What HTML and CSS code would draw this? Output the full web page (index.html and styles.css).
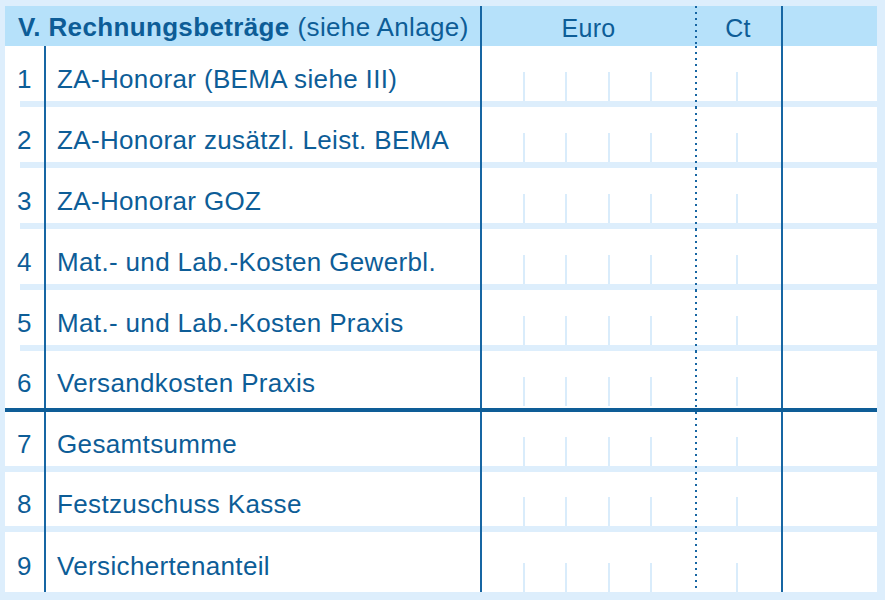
FILE: index.html
```html
<!DOCTYPE html>
<html lang="de">
<head>
<meta charset="utf-8">
<title>V. Rechnungsbeträge</title>
<link rel="stylesheet" href="styles.css">
</head>
<body>
<div class="form">
  <div class="head">
    <div class="h-title"><b>V. Rechnungsbeträge</b> (siehe Anlage)</div>
    <div class="h-euro">Euro</div>
    <div class="h-ct">Ct</div>
    <div class="h-extra"></div>
  </div>

  <div class="row">
    <div class="num">1</div><div class="label">ZA-Honorar (BEMA siehe III)</div>
    <div class="euro"><span></span><span></span><span></span><span></span><span></span></div>
    <div class="ct"><span></span><span></span></div><div class="extra"></div>
  </div>
  <div class="row">
    <div class="num">2</div><div class="label">ZA-Honorar zusätzl. Leist. BEMA</div>
    <div class="euro"><span></span><span></span><span></span><span></span><span></span></div>
    <div class="ct"><span></span><span></span></div><div class="extra"></div>
  </div>
  <div class="row">
    <div class="num">3</div><div class="label">ZA-Honorar GOZ</div>
    <div class="euro"><span></span><span></span><span></span><span></span><span></span></div>
    <div class="ct"><span></span><span></span></div><div class="extra"></div>
  </div>
  <div class="row">
    <div class="num">4</div><div class="label">Mat.- und Lab.-Kosten Gewerbl.</div>
    <div class="euro"><span></span><span></span><span></span><span></span><span></span></div>
    <div class="ct"><span></span><span></span></div><div class="extra"></div>
  </div>
  <div class="row">
    <div class="num">5</div><div class="label">Mat.- und Lab.-Kosten Praxis</div>
    <div class="euro"><span></span><span></span><span></span><span></span><span></span></div>
    <div class="ct"><span></span><span></span></div><div class="extra"></div>
  </div>
  <div class="row row-total">
    <div class="num">6</div><div class="label">Versandkosten Praxis</div>
    <div class="euro"><span></span><span></span><span></span><span></span><span></span></div>
    <div class="ct"><span></span><span></span></div><div class="extra"></div>
  </div>
  <div class="row row-low">
    <div class="num">7</div><div class="label">Gesamtsumme</div>
    <div class="euro"><span></span><span></span><span></span><span></span><span></span></div>
    <div class="ct"><span></span><span></span></div><div class="extra"></div>
  </div>
  <div class="row row-low">
    <div class="num">8</div><div class="label">Festzuschuss Kasse</div>
    <div class="euro"><span></span><span></span><span></span><span></span><span></span></div>
    <div class="ct"><span></span><span></span></div><div class="extra"></div>
  </div>
  <div class="row row-last">
    <div class="num">9</div><div class="label">Versichertenanteil</div>
    <div class="euro"><span></span><span></span><span></span><span></span><span></span></div>
    <div class="ct"><span></span><span></span></div><div class="extra"></div>
  </div>
</div>
</body>
</html>
```

FILE: styles.css
```css
:root {
  --page: #ddeefc;
  --head: #b6e1fa;
  --band: #ddeefc;
  --ink: #0d5d97;
  --line: #1766a3;
  --tick: #d9ecfb;
}

* { box-sizing: border-box; }

html, body {
  margin: 0;
  background: var(--page);
}

body {
  font-family: "Liberation Sans", Arial, Helvetica, sans-serif;
  color: var(--ink);
  width: 885px;
  height: 600px;
  overflow: hidden;
  letter-spacing: 0.35px;
}

.form {
  margin: 6px 0 0 5px;
  width: 872px;
}

.head,
.row {
  display: grid;
  grid-template-columns: 39px 436px 215px 86px 96px;
}

/* ---------- header ---------- */
.head {
  height: 40px;
  background: var(--head);
  font-size: 26px;
}

.h-title {
  grid-column: 1 / span 2;
  display: flex;
  align-items: center;
  padding-left: 13px;
  padding-top: 3px;
  white-space: nowrap;
}

.h-title b { font-weight: 700; margin-right: 8px; }

.h-euro,
.h-ct {
  display: flex;
  align-items: center;
  justify-content: center;
  font-size: 25px;
  padding-top: 5px;
}

.h-euro { border-left: 2px solid var(--line); }

.h-ct {
  background: linear-gradient(to bottom, var(--line) 2px, transparent 2px) 0 0 / 2px 6px repeat-y;
}

.h-extra { border-left: 2px solid var(--line); }

/* ---------- rows ---------- */
.row {
  height: 61px;
  font-size: 26px;
}

.row > div {
  background: linear-gradient(to top, var(--band) 6px, #fff 6px);
}

.num,
.label {
  padding-top: 5px;
}

.row > .num {
  background:
    linear-gradient(to top, var(--band) 6px, transparent 6px) 15px 0 / calc(100% - 15px) 100% no-repeat,
    #fff;
  display: flex;
  align-items: center;
  justify-content: center;
}

.label {
  border-left: 2px solid var(--line);
  display: flex;
  align-items: center;
  padding-left: 11px;
  white-space: nowrap;
}

.euro {
  border-left: 2px solid var(--line);
  display: flex;
  align-items: flex-end;
  padding-bottom: 6px;
}

.row > .ct {
  background:
    linear-gradient(to bottom, var(--line) 2px, transparent 2px) 0 0 / 2px 6px repeat-y,
    linear-gradient(to top, var(--band) 6px, #fff 6px);
  display: flex;
  align-items: flex-end;
  padding-bottom: 6px;
}

.euro span,
.ct span {
  width: 43px;
  height: 29px;
  border-right: 2px solid var(--tick);
}

.euro span:last-child,
.ct span:last-child { border-right: 0; }

.extra { border-left: 2px solid var(--line); }

/* row 6: thick rule below instead of band */
.row-total {
  border-bottom: 4px solid #0e5d97;
}
.row-total > div,
.row-total > .num {
  background: #fff;
}
.row-total > .ct {
  background:
    linear-gradient(to bottom, var(--line) 2px, transparent 2px) 0 0 / 2px 6px repeat-y,
    #fff;
}
.row-total .euro,
.row-total .ct { padding-bottom: 2px; }
.row-total .num,
.row-total .label { padding-top: 8px; }

.row-low { height: 60px; }
.row-low > .num {
  background: linear-gradient(to top, var(--band) 6px, #fff 6px);
}

.row-last { height: 60px; }
.row-last > div,
.row-last > .num { background: #fff; }
.row-last > .ct {
  background:
    linear-gradient(to bottom, var(--line) 2px, transparent 2px) 0 0 / 2px 6px repeat-y,
    #fff;
}
.row-last .euro,
.row-last .ct { padding-bottom: 0; }
.row-last .num,
.row-last .label { padding-top: 8px; }
```
